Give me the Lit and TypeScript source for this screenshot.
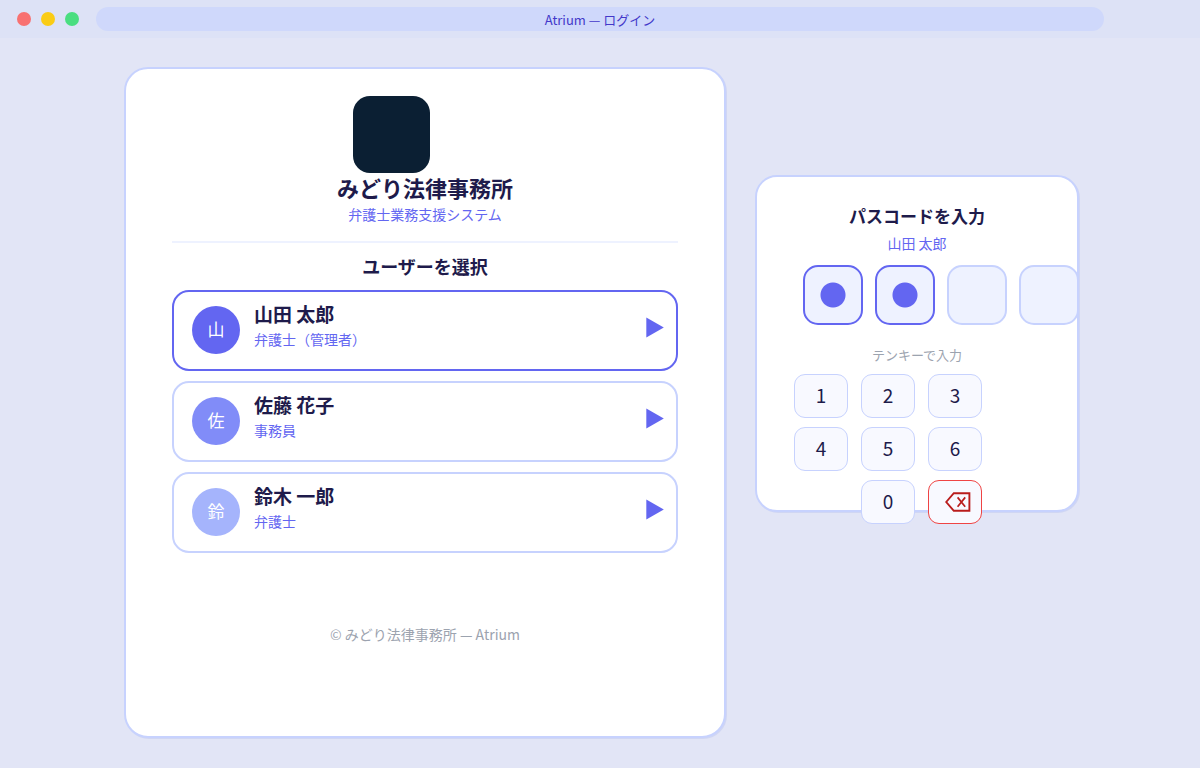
import { LitElement, html, css } from "lit";
import { customElement, state } from "lit/decorators.js";
import { classMap } from "lit/directives/class-map.js";

interface User {
  name: string;
  role: string;
  initial: string;
  tone: string;
}

const USERS: User[] = [
  { name: "山田 太郎", role: "弁護士（管理者）", initial: "山", tone: "strong" },
  { name: "佐藤 花子", role: "事務員", initial: "佐", tone: "medium" },
  { name: "鈴木 一郎", role: "弁護士", initial: "鈴", tone: "light" },
];

const KEYS = ["1", "2", "3", "4", "5", "6", "0"];
const PIN_LENGTH = 4;

@customElement("app-root")
export class AppRoot extends LitElement {
  @state() private selected = 0;
  @state() private entered = 2;

  static styles = css`
    :host {
      display: flex;
      flex-direction: column;
      min-height: 100vh;
      box-sizing: border-box;
      background: #e2e5f6;
      color: #1e1b4b;
      font-family: "Noto Sans CJK JP", sans-serif;
      font-size: 14px;
    }
    *,
    *::before,
    *::after {
      box-sizing: border-box;
    }
    h1,
    h2,
    p {
      margin: 0;
    }
    button {
      font: inherit;
      color: inherit;
      cursor: pointer;
    }

    .titlebar {
      display: flex;
      align-items: center;
      gap: 17px;
      height: 38px;
      padding: 0 96px 0 17px;
      background: #dde2f6;
    }
    .lights {
      display: flex;
      gap: 10px;
    }
    .light {
      width: 14px;
      height: 14px;
      border-radius: 50%;
    }
    .close {
      background: #f87171;
    }
    .minimize {
      background: #facc15;
    }
    .zoom {
      background: #4ade80;
    }
    .address {
      flex: 1;
      height: 24px;
      border-radius: 12px;
      background: #cfd8fb;
      color: #4338ca;
      font-size: 13px;
      line-height: 26px;
      text-align: center;
    }

    .main {
      display: grid;
      grid-template-columns: minmax(0, 602fr) minmax(0, 324fr);
      gap: 29px;
      align-items: start;
      padding: 29px 121px 30px 124px;
    }
    .card {
      border: 2px solid #c7d2fe;
      background: #ffffff;
      box-shadow: 1px 1px 0 #d0d6f3;
    }

    .login {
      padding: 27px 46px 92px;
      border-radius: 24px;
    }
    .logo {
      width: 77px;
      height: 77px;
      margin-left: 181px;
      border-radius: 17px;
      background: #0b1f33;
    }
    .firm {
      font-size: 22px;
      line-height: 28px;
      text-align: center;
    }
    .tagline {
      color: #6366f1;
      line-height: 26px;
      text-align: center;
    }
    .rule {
      height: 2px;
      margin: 14px 0 9px;
      border: 0;
      background: #eef2ff;
    }
    .section {
      font-size: 18px;
      line-height: 28px;
      text-align: center;
    }
    .users {
      display: grid;
      gap: 10px;
      margin: 10px 0 0;
      padding: 0;
      list-style: none;
    }
    .user {
      display: flex;
      align-items: flex-start;
      gap: 14px;
      width: 100%;
      height: 81px;
      padding: 14px 12px 0 18px;
      border: 2px solid #c7d2fe;
      border-radius: 17px;
      background: #ffffff;
      text-align: left;
    }
    .user.selected {
      border-color: #6366f1;
    }
    .avatar {
      flex: none;
      width: 48px;
      height: 48px;
      border-radius: 50%;
      color: #ffffff;
      font-size: 17px;
      line-height: 46px;
      text-align: center;
    }
    .strong {
      background: #6366f1;
    }
    .medium {
      background: #818cf8;
    }
    .light-tone {
      background: #a5b4fc;
    }
    .who {
      flex: 1;
      display: flex;
      flex-direction: column;
      gap: 6px;
    }
    .name {
      font-size: 19px;
      font-weight: 700;
      line-height: 16px;
    }
    .role {
      color: #6366f1;
      line-height: 22px;
    }
    .arrow {
      display: block;
      align-self: flex-start;
      margin-top: 11px;
      fill: #6366f1;
    }
    .copyright {
      margin-top: 71px;
      color: #9ca3af;
      line-height: 20px;
      text-align: center;
    }

    .passcode {
      margin-top: 108px;
      padding: 27px 0 0;
      border-radius: 22px;
    }
    .prompt {
      font-size: 17px;
      line-height: 24px;
      text-align: center;
    }
    .account {
      margin-top: 5px;
      color: #6366f1;
      line-height: 20px;
      text-align: center;
    }
    .pins {
      display: flex;
      gap: 12px;
      margin: 12px -2px 0 46px;
    }
    .pin {
      flex: none;
      width: 60px;
      height: 60px;
      margin: 0;
      padding: 0;
      border: 2px solid #c7d2fe;
      border-radius: 15px;
      background: #eef2ff;
      outline: none;
    }
    .pin.filled {
      border-color: #6366f1;
      background: radial-gradient(circle, #6366f1 12px, #eef2ff 13px);
    }
    .hint {
      margin-top: 20px;
      color: #9ca3af;
      font-size: 13px;
      line-height: 20px;
      text-align: center;
    }
    .keypad {
      display: grid;
      grid-template-columns: repeat(3, 54px);
      gap: 9px 13px;
      margin: 9px 0 -14px 37px;
    }
    .key {
      height: 44px;
      padding: 0 0 2px;
      border: 1px solid #c7d2fe;
      border-radius: 11px;
      background: #f8f9ff;
      font-size: 19px;
      line-height: 40px;
    }
    .key.zero {
      grid-column: 2;
    }
    .key.erase {
      display: grid;
      place-items: center;
      padding: 0 0 0 6px;
      border-color: #ef4444;
    }
    .key.erase svg {
      display: block;
      fill: none;
      stroke: #b91c1c;
    }
  `;

  private press() {
    this.entered = Math.min(PIN_LENGTH, this.entered + 1);
  }

  private erase() {
    this.entered = Math.max(0, this.entered - 1);
  }

  private select(index: number) {
    this.selected = index;
    this.entered = 0;
  }

  private renderUser(user: User, index: number) {
    const avatar = {
      avatar: true,
      strong: user.tone === "strong",
      medium: user.tone === "medium",
      "light-tone": user.tone === "light",
    };
    return html`<li>
      <button
        type="button"
        class=${classMap({ user: true, selected: index === this.selected })}
        aria-pressed=${index === this.selected}
        @click=${() => this.select(index)}
      >
        <span class=${classMap(avatar)}>${user.initial}</span>
        <span class="who">
          <span class="name">${user.name}</span>
          <span class="role">${user.role}</span>
        </span>
        <svg class="arrow" width="18" height="21" viewBox="0 0 18 21" aria-hidden="true">
          <path d="M0.3 0.4 L17.8 10.5 L0.3 20.6 Z" />
        </svg>
      </button>
    </li>`;
  }

  render() {
    return html`
      <header class="titlebar">
        <div class="lights">
          <span class="light close"></span>
          <span class="light minimize"></span>
          <span class="light zoom"></span>
        </div>
        <div class="address">Atrium — ログイン</div>
      </header>
      <main class="main">
        <section class="card login">
          <div class="logo"></div>
          <h1 class="firm">みどり法律事務所</h1>
          <p class="tagline">弁護士業務支援システム</p>
          <hr class="rule" />
          <h2 class="section">ユーザーを選択</h2>
          <ul class="users">
            ${USERS.map((user, index) => this.renderUser(user, index))}
          </ul>
          <p class="copyright">© みどり法律事務所 — Atrium</p>
        </section>
        <section class="card passcode">
          <h2 class="prompt" id="prompt">パスコードを入力</h2>
          <p class="account">${USERS[this.selected].name}</p>
          <div class="pins" role="group" aria-labelledby="prompt">
            ${Array.from(
              { length: PIN_LENGTH },
              (_, i) => html`<input
                type="password"
                readonly
                aria-labelledby="prompt"
                class=${classMap({ pin: true, filled: i < this.entered })}
              />`
            )}
          </div>
          <p class="hint">テンキーで入力</p>
          <div class="keypad">
            ${KEYS.map(
              (key) => html`<button
                type="button"
                class=${classMap({ key: true, zero: key === "0" })}
                @click=${this.press}
              >${key}</button>`
            )}
            <button type="button" class="key erase" aria-label="削除" @click=${this.erase}>
              <svg width="26" height="20" viewBox="0 0 26 20" aria-hidden="true">
                <path d="M1.2 10 L8.8 1.2 H24.4 V18.8 H8.8 Z" stroke-width="1.9" />
                <path d="M12.6 5.4 L20.2 14.8 M20.2 5.4 L12.6 14.8" stroke-width="1.7" />
              </svg>
            </button>
          </div>
        </section>
      </main>
    `;
  }
}
